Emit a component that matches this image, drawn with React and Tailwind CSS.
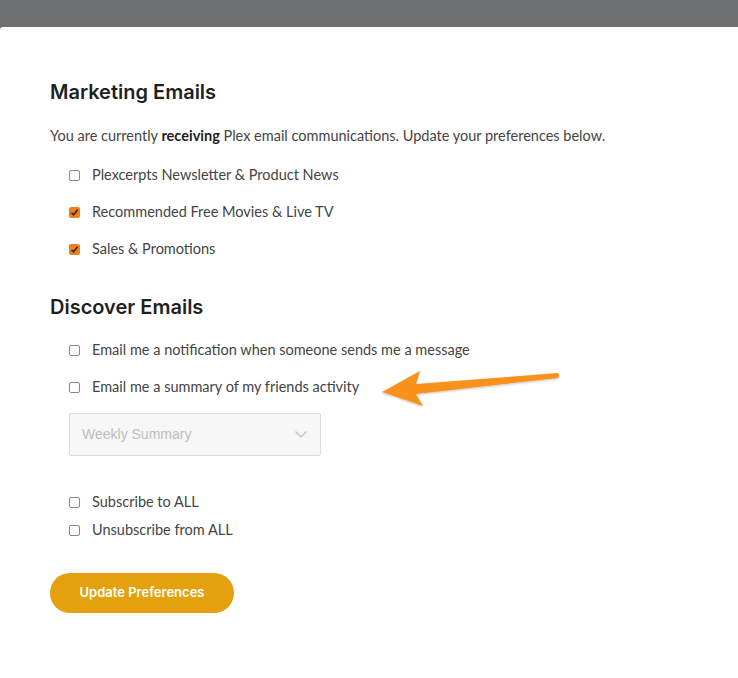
import React from "react";

const body = { fontFamily: "Lato, 'Noto Sans', sans-serif" };

function Box({ checked }) {
  return checked ? (
    <span className="flex h-[11px] w-[11px] items-center justify-center rounded-[2px] bg-[#f07f1a]">
      <svg width="9" height="9" viewBox="0 0 9 9">
        <path d="M1.5 4.8 L3.6 6.8 L7.6 1.8" fill="none" stroke="#2a2a2a" strokeWidth="1.6" />
      </svg>
    </span>
  ) : (
    <span className="block h-[11px] w-[11px] rounded-[2px] border border-[#8a8a8a] bg-white" />
  );
}

function Row({ checked, children, className = "" }) {
  return (
    <div className={"flex items-center gap-[12px] pl-[19px] " + className}>
      <Box checked={checked} />
      <span className="text-[14.5px] text-[#444444]" style={body}>{children}</span>
    </div>
  );
}

export default function App() {
  return (
    <div className="relative h-[678px] w-[738px] overflow-hidden bg-[#6e6f71]" style={{ fontFamily: "Inter, 'Noto Sans', sans-serif" }}>
      <div className="mt-[27px] h-[651px] rounded-tl-[3px] bg-white px-[50px] pt-[52px]">
        <h1 className="text-[20px] font-semibold leading-[26px] text-[#1f1f1f]">Marketing Emails</h1>
        <p className="mt-[22px] text-[14.5px] leading-[18px] text-[#444444]" style={body}>
          You are currently <b className="font-bold text-[#1f1f1f]">receiving</b> Plex email communications. Update your preferences below.
        </p>
        <div className="mt-[21px] flex flex-col gap-[19px] leading-[18px]">
          <Row>Plexcerpts Newsletter &amp; Product News</Row>
          <Row checked>Recommended Free Movies &amp; Live TV</Row>
          <Row checked>Sales &amp; Promotions</Row>
        </div>
        <h2 className="mt-[36px] text-[20px] font-semibold leading-[26px] text-[#1f1f1f]">Discover Emails</h2>
        <div className="mt-[21px] flex flex-col gap-[19px] leading-[18px]">
          <Row>Email me a notification when someone sends me a message</Row>
          <Row>Email me a summary of my friends activity</Row>
        </div>
        <div className="ml-[19px] mt-[17px] flex h-[43px] w-[252px] items-center justify-between rounded-[2px] border border-[#dcdcdc] bg-[#f7f7f7] pl-[12px] pr-[12px]">
          <span className="text-[14px] text-[#bdbdbd]" style={{ fontFamily: "'Liberation Sans', Arial, sans-serif" }}>Weekly Summary</span>
          <svg width="14" height="9" viewBox="0 0 14 9">
            <path d="M1.5 1.5 L7 7 L12.5 1.5" fill="none" stroke="#c4c4c4" strokeWidth="1.4" />
          </svg>
        </div>
        <div className="mt-[37px] flex flex-col gap-[10px] leading-[18px]">
          <Row>Subscribe to ALL</Row>
          <Row>Unsubscribe from ALL</Row>
        </div>
        <button className="mt-[34px] h-[40px] w-[184px] rounded-full bg-[#e5a00d] text-[13px] font-semibold text-white">
          Update Preferences
        </button>
      </div>
      <svg className="absolute left-[378px] top-[364px]" width="186" height="46" viewBox="0 0 186 46">
        <defs>
          <filter id="sh" x="-10%" y="-30%" width="120%" height="160%">
            <feDropShadow dx="0" dy="1" stdDeviation="1" floodColor="#000" floodOpacity="0.25" />
          </filter>
        </defs>
        <path
          d="M4 28 L42 7 L38 20 L180 9 Q182 11 180 14 L38 30 L45 42 Z"
          fill="#f7931e"
          filter="url(#sh)"
        />
      </svg>
    </div>
  );
}
